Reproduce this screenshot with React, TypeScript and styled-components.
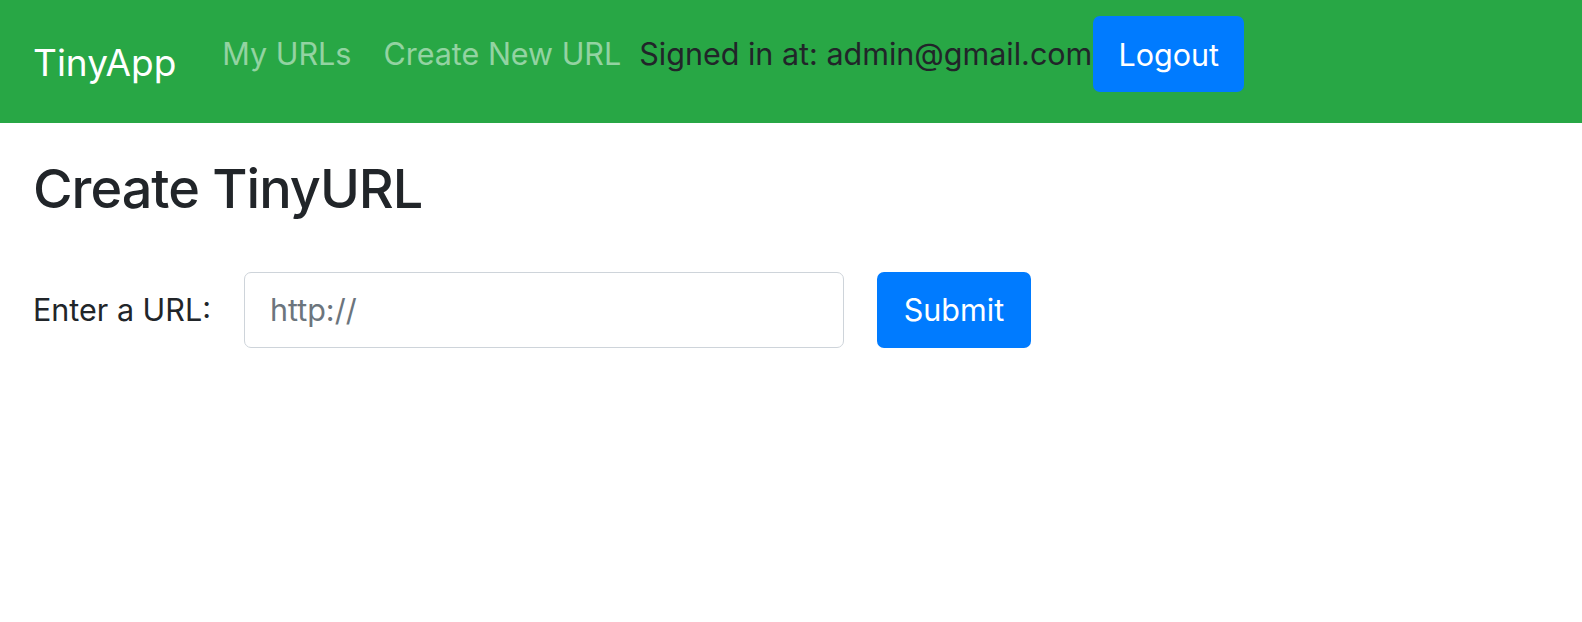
import React from 'react';
import styled, {createGlobalStyle} from 'styled-components';

const GlobalStyle = createGlobalStyle`
  html, body {
    margin: 0;
    padding: 0;
    background: #fff;
  }
  body {
    font-family: Inter, "Liberation Sans", Arial, sans-serif;
    color: #212529;
  }
`

export default function App() {
    return (
        <>
            <GlobalStyle/>
            <Navbar>
                <Brand href={'#'}>TinyApp</Brand>
                <Menu>
                    <NavLink href={'#'}>My URLs</NavLink>
                    <NavLink href={'#'}>Create New URL</NavLink>
                    <SignedIn>Signed in at: admin@gmail.com</SignedIn>
                    <Button type={'button'} width={151}>Logout</Button>
                </Menu>
            </Navbar>
            <Main>
                <Title>Create TinyURL</Title>
                <UrlForm onSubmit={(e) => e.preventDefault()}>
                    <Label htmlFor={'longURL'}>Enter a URL:</Label>
                    <UrlInput id={'longURL'} type={'text'} placeholder={'http://'}/>
                    <Button type={'submit'} width={154}>Submit</Button>
                </UrlForm>
            </Main>
        </>
    );
}

const Navbar = styled.nav`
  display: flex;
  align-items: center;
  height: 123px;
  box-sizing: border-box;
  padding: 16px 30px 15px 33px;
  background-color: #28a745;
`

const Brand = styled.a`
  font-size: 37px;
  line-height: 57px;
  color: #fff;
  text-decoration: none;
  margin-right: 30px;
  margin-top: 1px;
  white-space: nowrap;
`

const Menu = styled.div`
  display: flex;
  align-items: center;
  align-self: flex-start;
  height: 76px;
`

const NavLink = styled.a`
  font-size: 30.5px;
  line-height: 46px;
  padding: 0 16px;
  color: rgba(255, 255, 255, 0.5);
  text-decoration: none;
  white-space: nowrap;

  &:last-of-type {
    padding-right: 18px;
  }
`

const SignedIn = styled.span`
  font-size: 30.5px;
  line-height: 46px;
  color: #212529;
  white-space: nowrap;
  margin-right: 1px;
`

const Button = styled.button<{ width: number }>`
  width: ${(props) => props.width}px;
  height: 76px;
  padding: 0;
  border: none;
  border-radius: 7px;
  background-color: #007bff;
  color: #fff;
  font-family: Inter, "Liberation Sans", Arial, sans-serif;
  font-size: 30.5px;
  cursor: pointer;
  flex-shrink: 0;
`

const Main = styled.main`
  padding: 0 33px;
`

const Title = styled.h1`
  margin: 34px 0 50px;
  font-size: 54px;
  font-weight: 500;
  line-height: 1.2;
  letter-spacing: -1px;
  color: #212529;
`

const UrlForm = styled.form`
  display: flex;
  align-items: center;
  gap: 33px;
`

const Label = styled.label`
  font-size: 30.5px;
  color: #212529;
`

const UrlInput = styled.input`
  width: 600px;
  height: 76px;
  box-sizing: border-box;
  padding: 0 25px;
  border: 1px solid #ced4da;
  border-radius: 7px;
  font-family: Inter, "Liberation Sans", Arial, sans-serif;
  font-size: 30.5px;
  color: #495057;
  outline: none;

  &::placeholder {
    color: #6c757d;
  }
`
